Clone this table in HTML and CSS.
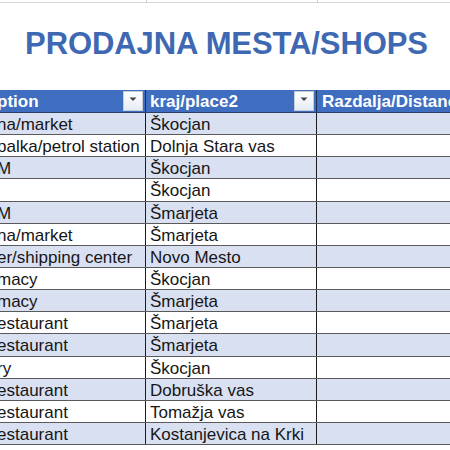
FILE: index.html
```html
<!DOCTYPE html>
<html>
<head>
<meta charset="utf-8">
<link rel="stylesheet" href="styles.css">
</head>
<body>
<div class="sheet">
  <div class="strip"><div></div><div></div><div></div></div>
  <h1 class="title">PRODAJNA MESTA/SHOPS</h1>
  <div class="table">
    <div class="row head">
      <div class="cell c1"><span class="clip">ption</span><span class="dd"><svg width="8" height="5" viewBox="0 0 8 5"><path d="M0.5 0.5 L7.5 0.5 L4 4 Z" fill="#444"/></svg></span></div>
      <div class="cell c2"><span>kraj/place2</span><span class="dd"><svg width="8" height="5" viewBox="0 0 8 5"><path d="M0.5 0.5 L7.5 0.5 L4 4 Z" fill="#444"/></svg></span></div>
      <div class="cell c3"><span>Razdalja/Distance</span></div>
    </div>
    <div class="row band"><div class="cell c1"><span class="clip">na/market</span></div><div class="cell c2">Škocjan</div><div class="cell c3"></div></div>
    <div class="row"><div class="cell c1"><span class="clip">palka/petrol station</span></div><div class="cell c2">Dolnja Stara vas</div><div class="cell c3"></div></div>
    <div class="row band"><div class="cell c1"><span class="clip">M</span></div><div class="cell c2">Škocjan</div><div class="cell c3"></div></div>
    <div class="row"><div class="cell c1"></div><div class="cell c2">Škocjan</div><div class="cell c3"></div></div>
    <div class="row band"><div class="cell c1"><span class="clip">M</span></div><div class="cell c2">Šmarjeta</div><div class="cell c3"></div></div>
    <div class="row"><div class="cell c1"><span class="clip">na/market</span></div><div class="cell c2">Šmarjeta</div><div class="cell c3"></div></div>
    <div class="row band"><div class="cell c1"><span class="clip">er/shipping center</span></div><div class="cell c2">Novo Mesto</div><div class="cell c3"></div></div>
    <div class="row"><div class="cell c1"><span class="clip">macy</span></div><div class="cell c2">Škocjan</div><div class="cell c3"></div></div>
    <div class="row band"><div class="cell c1"><span class="clip">macy</span></div><div class="cell c2">Šmarjeta</div><div class="cell c3"></div></div>
    <div class="row"><div class="cell c1"><span class="clip">estaurant</span></div><div class="cell c2">Šmarjeta</div><div class="cell c3"></div></div>
    <div class="row band"><div class="cell c1"><span class="clip">estaurant</span></div><div class="cell c2">Šmarjeta</div><div class="cell c3"></div></div>
    <div class="row"><div class="cell c1"><span class="clip">ry</span></div><div class="cell c2">Škocjan</div><div class="cell c3"></div></div>
    <div class="row band"><div class="cell c1"><span class="clip">estaurant</span></div><div class="cell c2">Dobruška vas</div><div class="cell c3"></div></div>
    <div class="row"><div class="cell c1"><span class="clip">estaurant</span></div><div class="cell c2">Tomažja vas</div><div class="cell c3"></div></div>
    <div class="row band"><div class="cell c1"><span class="clip">estaurant</span></div><div class="cell c2">Kostanjevica na Krki</div><div class="cell c3"></div></div>
  </div>
</div>
</body>
</html>
```

FILE: styles.css
```css
* { box-sizing: border-box; }
html, body { margin: 0; padding: 0; background: #fff; }
body { width: 450px; height: 450px; overflow: hidden; font-family: "Liberation Sans", Arial, sans-serif; }

.sheet { width: 450px; }

.strip {
  display: grid;
  grid-template-columns: 147px 171px 1fr;
  height: 3px;
  border-bottom: 1px solid #d6d6d6;
}
.strip > div { border-right: 1px solid #cfcfcf; }
.strip > div:last-child { border-right: 0; }

.title {
  margin: 0;
  padding: 23px 0 0 0;
  height: 87px;
  font-size: 31px;
  line-height: 36px;
  font-weight: bold;
  color: #3e69b2;
  text-align: center;
  padding-left: 3px;
  letter-spacing: -0.1px;
}

.table { width: 450px; }

.row {
  display: grid;
  grid-template-columns: 146px 171px 1fr;
  height: 22.15px;
  border-bottom: 1px solid #5a5a5a;
  font-size: 17px;
  line-height: 21px;
  color: #161616;
  background: #fff;
}
.row.band { background: #d9e0f2; }

.row.head {
  height: 23px;
  background: #3f6ec0;
  color: #fff;
  font-weight: bold;
  border-bottom: 1px solid #2b3f66;
}

.cell {
  border-right: 1px solid #1c1c1c;
  padding: 1px 0 0 4px;
  white-space: nowrap;
  overflow: hidden;
  display: flex;
  align-items: flex-start;
}
.cell.c3 { border-right: 0; }
.cell.c1 { padding-left: 0; }
.row.head .cell { align-items: center; padding-top: 0; justify-content: space-between; border-right-color: #1d2e55; }
.row.head .cell.c3 { padding-left: 5px; justify-content: flex-start; }

.clip { margin-left: -3px; }

.dd {
  width: 20px;
  height: 20px;
  margin-right: 2px;
  background: linear-gradient(#ffffff, #e6ecf5);
  border: 1px solid #c4ccd8;
  display: flex;
  align-items: center;
  justify-content: center;
  flex: none;
}
.dd svg { display: block; margin-top: -3px; }
```
